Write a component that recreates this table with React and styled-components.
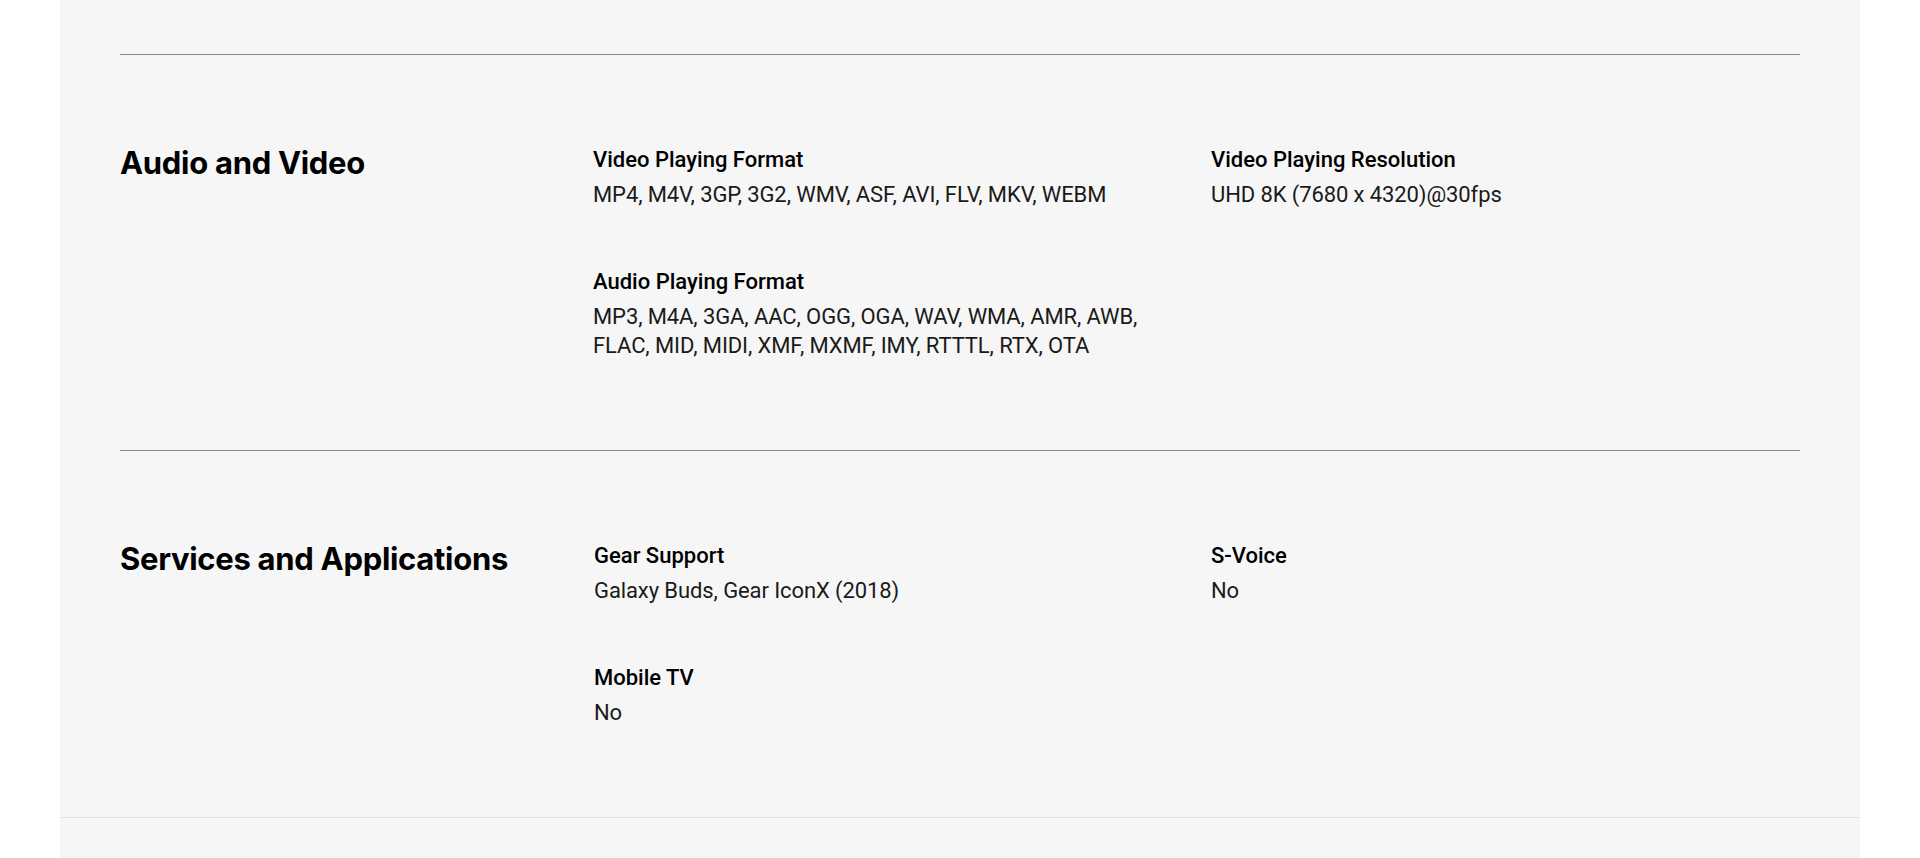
import React from "react";
import styled, { createGlobalStyle } from "styled-components";

const GlobalStyle = createGlobalStyle`
  html, body {
    margin: 0;
    padding: 0;
    background: #ffffff;
  }
  body {
    font-family: Roboto, "Noto Sans", sans-serif;
    color: #000;
  }
`;

const Page = styled.div`
  display: flex;
  justify-content: center;
  min-height: 858px;
`;

const Panel = styled.main`
  width: 1800px;
  background: #f6f6f6;
  display: flex;
  flex-direction: column;
  padding-top: 54px;
`;

const Inner = styled.div`
  padding: 0 60px;
`;

const Section = styled.section`
  display: grid;
  grid-template-columns: 473px 618px 1fr;
  border-top: 1px solid #8a8a8a;
  padding: 91px 0 90px;
`;

const SectionTitle = styled.h2`
  margin: 0;
  font-family: Inter, "Noto Sans", sans-serif;
  font-weight: 700;
  font-size: 31px;
  line-height: 34px;
  letter-spacing: -0.3px;
  color: #000;
`;

const SpecGrid = styled.dl`
  grid-column: 2 / 4;
  margin: 0;
  display: grid;
  grid-template-columns: 618px 1fr;
  row-gap: 59px;
`;

const Spec = styled.div`
  display: flex;
  flex-direction: column;
  gap: 6px;
  padding-left: ${(p) => (p.$nudge ? "1px" : "0")};
`;

const Label = styled.dt`
  font-family: Roboto, "Noto Sans", sans-serif;
  font-weight: 500;
  font-size: 22px;
  line-height: 28px;
  letter-spacing: 0;
  color: #000;
`;

const Value = styled.dd`
  margin: 0;
  font-family: Roboto, "Noto Sans", sans-serif;
  font-weight: 400;
  font-size: 22px;
  line-height: 29px;
  letter-spacing: -0.1px;
  color: #1a1a1a;
  max-width: 565px;
`;

const Footer = styled.div`
  flex: 1;
  border-top: 1px solid #dedede;
  min-height: 40px;
`;

const sections = [
  {
    title: "Audio and Video",
    specs: [
      {
        label: "Video Playing Format",
        value: "MP4, M4V, 3GP, 3G2, WMV, ASF, AVI, FLV, MKV, WEBM",
      },
      { label: "Video Playing Resolution", value: "UHD 8K (7680 x 4320)@30fps" },
      {
        label: "Audio Playing Format",
        value:
          "MP3, M4A, 3GA, AAC, OGG, OGA, WAV, WMA, AMR, AWB, FLAC, MID, MIDI, XMF, MXMF, IMY, RTTTL, RTX, OTA",
      },
    ],
  },
  {
    title: "Services and Applications",
    nudge: true,
    specs: [
      { label: "Gear Support", value: "Galaxy Buds, Gear IconX (2018)" },
      { label: "S-Voice", value: "No" },
      { label: "Mobile TV", value: "No" },
    ],
  },
];

export default function App() {
  return (
    <>
      <GlobalStyle />
      <Page>
        <Panel>
          <Inner>
            {sections.map((s) => (
              <Section key={s.title}>
                <SectionTitle>{s.title}</SectionTitle>
                <SpecGrid>
                  {s.specs.map((spec, i) => (
                    <Spec key={spec.label} $nudge={s.nudge && i % 2 === 0}>
                      <Label>{spec.label}</Label>
                      <Value>{spec.value}</Value>
                    </Spec>
                  ))}
                </SpecGrid>
              </Section>
            ))}
          </Inner>
          <Footer />
        </Panel>
      </Page>
    </>
  );
}
